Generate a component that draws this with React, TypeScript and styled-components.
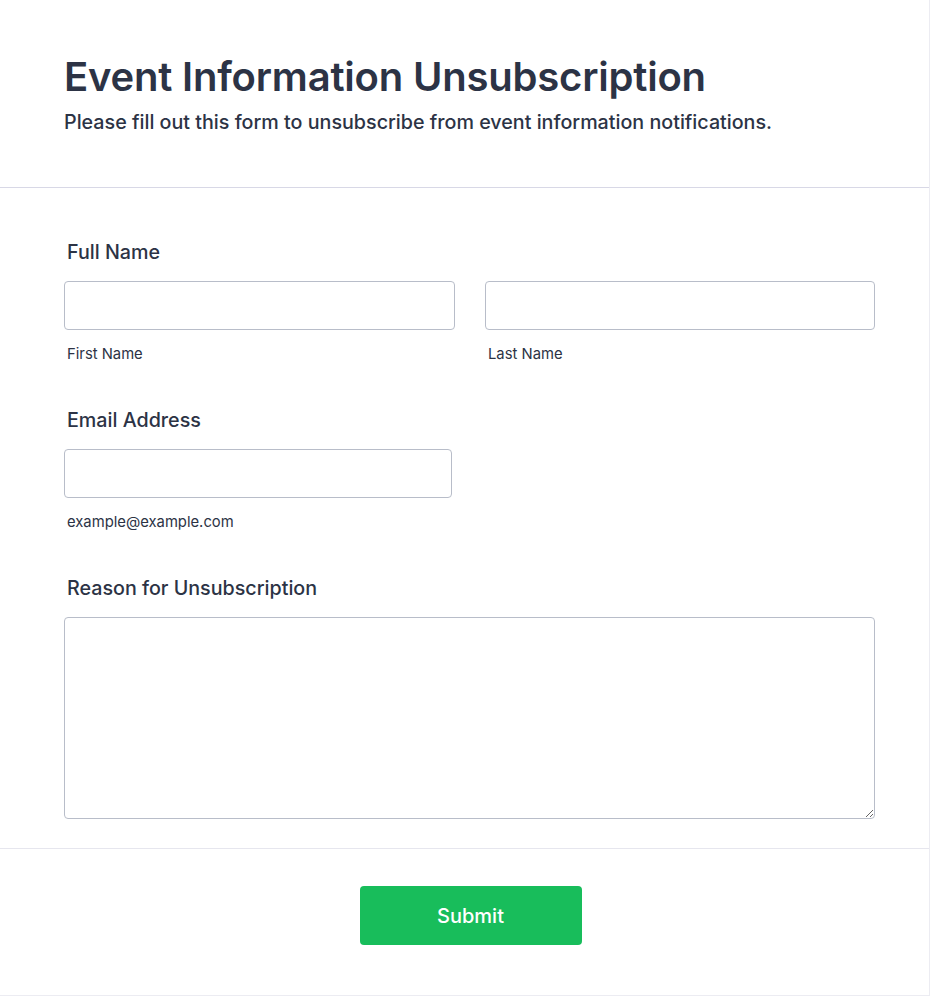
import React from "react";
import styled, { createGlobalStyle } from "styled-components";

const Global = createGlobalStyle`
  html, body { margin: 0; padding: 0; background: #ffffff; }
  body { font-family: Inter, "Noto Sans", sans-serif; color: #2c3345; }
  * { box-sizing: border-box; }
`;

const Card = styled.div`
  width: 930px;
  min-height: 996px;
  background: #fff;
  border-right: 1px solid #ececf2;
  border-bottom: 1px solid #ececf2;
  display: flex;
  flex-direction: column;
`;

const Header = styled.header`
  padding: 53px 64px 51px;
  border-bottom: 1px solid #d8d8e6;
`;

const Title = styled.h1`
  margin: 0;
  font-size: 40px;
  line-height: 48px;
  font-weight: 600;
  color: #2c3345;
  letter-spacing: -0.2px;
`;

const Subtitle = styled.p`
  margin: 7px 0 0;
  font-size: 19.7px;
  line-height: 28px;
  font-weight: 500;
  color: #2c3345;
`;

const FormBody = styled.div`
  padding: 51px 55px 29px 64px;
  display: flex;
  flex-direction: column;
`;

const Field = styled.div`
  display: flex;
  flex-direction: column;
  margin-bottom: 44px;
  &:last-child { margin-bottom: 0; }
`;

const Label = styled.label`
  font-size: 19.7px;
  line-height: 26px;
  font-weight: 500;
  color: #2c3345;
  padding-left: 3px;
  margin-bottom: 16px;
`;

const Row = styled.div`
  display: grid;
  grid-template-columns: 391px 390px;
  column-gap: 30px;
`;

const Sub = styled.div`
  display: flex;
  flex-direction: column;
`;

const Input = styled.input<{ $w?: number }>`
  width: ${(p) => (p.$w ? `${p.$w}px` : "100%")};
  height: 49px;
  border: 1px solid #b8bdc9;
  border-radius: 4px;
  background: #fff;
  font-family: inherit;
  font-size: 16px;
  padding: 0 12px;
  outline: none;
`;

const SubLabel = styled.span`
  font-size: 14.8px;
  line-height: 18px;
  color: #2c3345;
  padding-left: 3px;
  margin-top: 15px;
`;

const TextArea = styled.textarea`
  width: 811px;
  height: 202px;
  border: 1px solid #b8bdc9;
  border-radius: 4px;
  font-family: inherit;
  font-size: 16px;
  padding: 10px 12px;
  resize: vertical;
  outline: none;
  display: block;
`;

const Footer = styled.footer`
  border-top: 1px solid #e6e6ee;
  padding: 37px 0 50px 12px;
  display: flex;
  justify-content: center;
`;

const Button = styled.button`
  width: 222px;
  height: 59px;
  background: #18bd5b;
  color: #fff;
  border: none;
  border-radius: 4px;
  font-family: inherit;
  font-size: 20px;
  font-weight: 500;
  padding-top: 2px;
  cursor: pointer;
`;

export default function App() {
  return (
    <>
      <Global />
      <Card>
        <Header>
          <Title>Event Information Unsubscription</Title>
          <Subtitle>Please fill out this form to unsubscribe from event information notifications.</Subtitle>
        </Header>
        <FormBody>
          <Field>
            <Label>Full Name</Label>
            <Row>
              <Sub>
                <Input type="text" />
                <SubLabel>First Name</SubLabel>
              </Sub>
              <Sub>
                <Input type="text" />
                <SubLabel>Last Name</SubLabel>
              </Sub>
            </Row>
          </Field>
          <Field>
            <Label>Email Address</Label>
            <Sub>
              <Input type="email" $w={388} />
              <SubLabel>example@example.com</SubLabel>
            </Sub>
          </Field>
          <Field>
            <Label>Reason for Unsubscription</Label>
            <TextArea />
          </Field>
        </FormBody>
        <Footer>
          <Button type="button">Submit</Button>
        </Footer>
      </Card>
    </>
  );
}
